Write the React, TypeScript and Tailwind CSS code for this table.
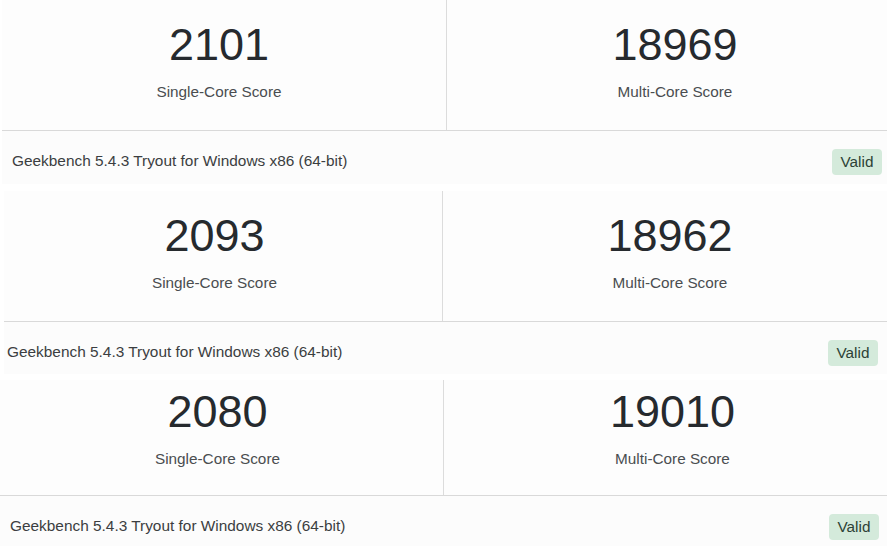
import React from "react";

const results = [
  {
    single: "2101",
    multi: "18969",
    outer: "ml-[2px]",
    inner: "-ml-[10px]",
    leftCol: "w-[455px]",
    rightCol: "w-[456px]",
    rowHeight: "h-[131px]",
    rowPad: "pt-[18px]",
    footer: "h-[53px] pl-[10px] pr-[5px]",
    gap: "mb-[7px]",
  },
  {
    single: "2093",
    multi: "18962",
    outer: "ml-[4px]",
    inner: "-ml-[17px]",
    leftCol: "w-[456px]",
    rightCol: "w-[454px]",
    rowHeight: "h-[131px]",
    rowPad: "pt-[18px]",
    footer: "h-[52px] pl-[3px] pr-[9px]",
    gap: "mb-[6px]",
  },
  {
    single: "2080",
    multi: "19010",
    outer: "ml-0",
    inner: "-ml-[8px]",
    leftCol: "w-[452px]",
    rightCol: "w-[457px]",
    rowHeight: "h-[116px]",
    rowPad: "pt-[5px]",
    footer: "h-[50px] pl-[10px] pr-[8px]",
    gap: "mb-0",
  },
];

const Score = ({ value, label, width, pad, divider }: { value: string; label: string; width: string; pad: string; divider?: boolean }) => {
  return (
    <div
      className={`${width} ${pad} shrink-0 h-full flex flex-col items-center ${
        divider ? "border-r border-[#dcdcdc]" : ""
      }`}
    >
      <div className="text-[45px] leading-[54px] text-[#262a2e]">{value}</div>
      <div className="mt-[10px] text-[15.3px] leading-[20px] text-[#4a4d50]">{label}</div>
    </div>
  );
};

export default function App() {
  return (
    <div className="w-[887px] h-[546px] overflow-hidden bg-white font-['Liberation_Sans',Arial,sans-serif]">
      {results.map((r) => {
        return (
          <div key={r.single} className={`${r.outer} ${r.gap} bg-[#fcfcfc]`}>
            <div className={`${r.rowHeight} overflow-hidden border-b border-[#d9d9d9] bg-[#fdfdfd]`}>
              <div className={`${r.inner} flex h-full`}>
                <Score value={r.single} label="Single-Core Score" width={r.leftCol} pad={r.rowPad} divider />
                <Score value={r.multi} label="Multi-Core Score" width={r.rightCol} pad={r.rowPad} />
              </div>
            </div>
            <div className={`${r.footer} flex items-start justify-between pt-[18px]`}>
              <span className="mt-[1.5px] text-[15.4px] leading-[20px] text-[#3b3e41]">
                Geekbench 5.4.3 Tryout for Windows x86 (64-bit)
              </span>
              <span className="w-[50px] h-[26px] flex items-center justify-center rounded-[4px] bg-[#d4eadb] text-[15.3px] text-[#2d4236]">
                Valid
              </span>
            </div>
          </div>
        );
      })}
    </div>
  );
}
